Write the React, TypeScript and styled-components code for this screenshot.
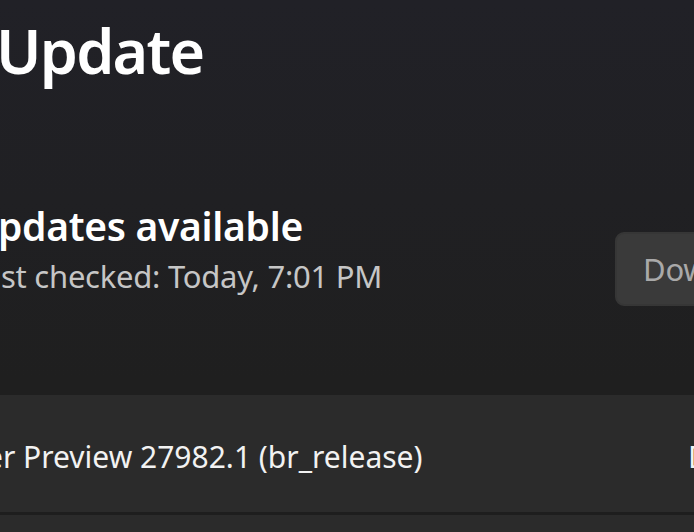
import React from "react";
import styled, { createGlobalStyle } from "styled-components";

const Global = createGlobalStyle`
  html, body { margin: 0; padding: 0; background: #1f1f1f; }
  body { overflow: hidden; }
`;

const Page = styled.div`
  width: 694px;
  height: 532px;
  overflow: hidden;
  padding-top: 19px;
  box-sizing: border-box;
  background: linear-gradient(180deg, #212127 0px, #202023 200px, #1f1f1f 380px, #1f1f1f 532px);
  font-family: "Noto Sans", "Open Sans", sans-serif;
  color: #ffffff;
`;

const Title = styled.h1`
  margin: 0 0 0 -4px;
  font-size: 61px;
  line-height: 64px;
  font-weight: 600;
  letter-spacing: -1.8px;
  white-space: nowrap;
`;

const StatusRow = styled.div`
  display: grid;
  grid-template-columns: 615px 1fr;
  align-items: start;
  margin-top: 119px;
`;

const StatusText = styled.div`
  display: flex;
  flex-direction: column;
  gap: 6px;
`;

const StatusHeading = styled.div`
  font-size: 39px;
  line-height: 48px;
  font-weight: 600;
  letter-spacing: -0.3px;
  white-space: nowrap;
  margin-left: -2px;
`;

const StatusSub = styled.div`
  font-size: 31px;
  line-height: 40px;
  letter-spacing: -0.25px;
  color: #c6c6c6;
  white-space: nowrap;
  margin-left: 1px;
`;

const ActionButton = styled.button`
  margin-top: 30px;
  height: 74px;
  width: 320px;
  border: 2px solid #363636;
  border-radius: 9px;
  background: #3a3a3a;
  color: #a9a9a9;
  font-family: inherit;
  font-size: 31px;
  letter-spacing: -0.2px;
  text-align: left;
  padding: 0 0 0 26px;
  white-space: nowrap;
`;

const CardList = styled.div`
  margin-top: 89px;
  display: flex;
  flex-direction: column;
  gap: 3px;
  background: #1e1e1e;
`;

const Card = styled.div<{ $height: number }>`
  height: ${(p) => p.$height}px;
  box-sizing: border-box;
  padding-top: 42px;
  background: #2b2b2b;
  display: grid;
  grid-template-columns: 688px 1fr;
  align-items: start;
`;

const CardTitle = styled.div`
  font-size: 30px;
  line-height: 40px;
  color: #f2f2f2;
  white-space: nowrap;
  margin-left: -14px;
`;

const CardStatus = styled.div`
  font-size: 30px;
  line-height: 40px;
  color: #f2f2f2;
  white-space: nowrap;
`;

export default function App() {
  return (
    <>
      <Global />
      <Page>
        <Title>Update</Title>
        <StatusRow>
          <StatusText>
            <StatusHeading>pdates available</StatusHeading>
            <StatusSub>st checked: Today, 7:01 PM</StatusSub>
          </StatusText>
          <ActionButton>Download &amp; install</ActionButton>
        </StatusRow>
        <CardList>
          <Card $height={117}>
            <CardTitle>er Preview 27982.1 (br_release)</CardTitle>
            <CardStatus>Downloading</CardStatus>
          </Card>
          <Card $height={40} />
        </CardList>
      </Page>
    </>
  );
}
